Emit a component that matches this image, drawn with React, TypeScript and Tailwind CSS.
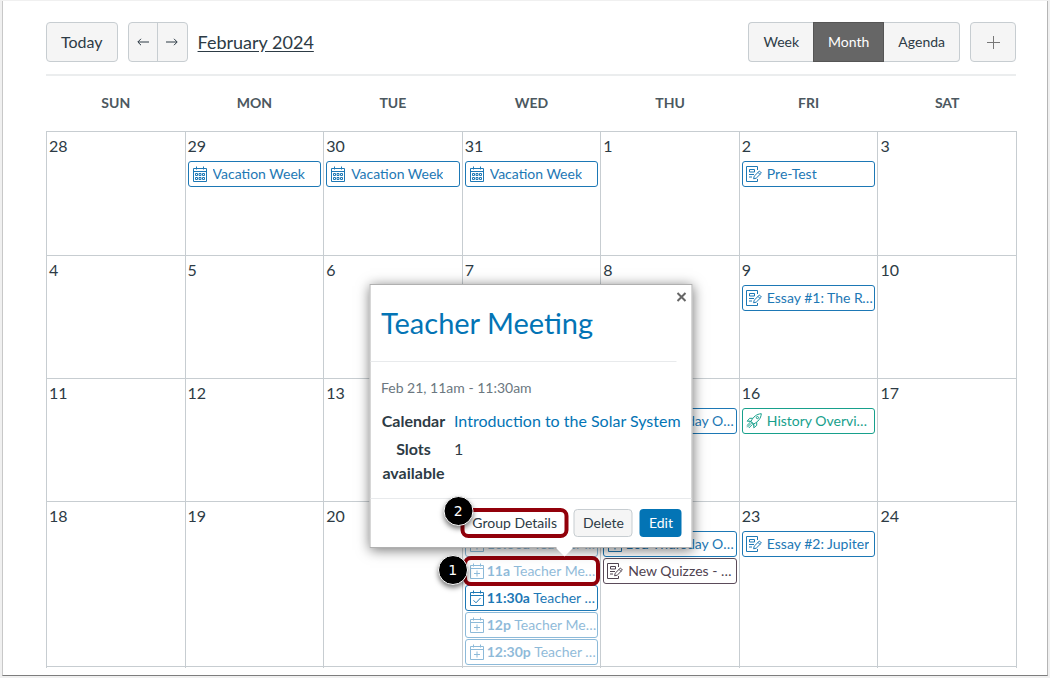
import React from "react";
import clsx from "clsx";

type IconName = "calendar" | "add" | "reserved" | "assignment" | "rocket";

type CalendarEvent = {
  title: string;
  time?: string;
  icon: IconName;
  color?: "blue" | "green" | "plum";
  faded?: boolean;
  open?: boolean;
};

type Day = { date: number; events?: CalendarEvent[] };

const vacation: CalendarEvent = { title: "Vacation Week", icon: "calendar" };
const officeHours: CalendarEvent = { time: "10a", title: "Thursday Office Hours", icon: "add" };

const weekdays = ["SUN", "MON", "TUE", "WED", "THU", "FRI", "SAT"];

const weeks: Day[][] = [
  [
    { date: 28 },
    { date: 29, events: [vacation] },
    { date: 30, events: [vacation] },
    { date: 31, events: [vacation] },
    { date: 1 },
    { date: 2, events: [{ title: "Pre-Test", icon: "assignment" }] },
    { date: 3 },
  ],
  [
    { date: 4 },
    { date: 5 },
    { date: 6 },
    { date: 7 },
    { date: 8 },
    { date: 9, events: [{ title: "Essay #1: The Rocket", icon: "assignment" }] },
    { date: 10 },
  ],
  [
    { date: 11 },
    { date: 12 },
    { date: 13 },
    { date: 14 },
    { date: 15, events: [officeHours] },
    { date: 16, events: [{ title: "History Overview Quiz", icon: "rocket", color: "green" }] },
    { date: 17 },
  ],
  [
    { date: 18 },
    { date: 19 },
    { date: 20 },
    {
      date: 21,
      events: [
        { time: "10:30a", title: "Teacher Meeting", icon: "add", faded: true },
        { time: "11a", title: "Teacher Meeting", icon: "add", faded: true, open: true },
        { time: "11:30a", title: "Teacher Meeting", icon: "reserved" },
        { time: "12p", title: "Teacher Meeting", icon: "add", faded: true },
        { time: "12:30p", title: "Teacher Meeting", icon: "add", faded: true },
      ],
    },
    {
      date: 22,
      events: [officeHours, { title: "New Quizzes - Module 2", icon: "assignment", color: "plum" }],
    },
    { date: 23, events: [{ title: "Essay #2: Jupiter", icon: "assignment" }] },
    { date: 24 },
  ],
];

const colors = {
  blue: "border-[#1d78b5] text-[#1d78b5]",
  green: "border-[#17a08c] text-[#17a08c]",
  plum: "border-[#5b4b5a] text-[#4f4350]",
};

const Icon = ({ name }: { name: IconName }) => (
  <svg
    viewBox="0 0 16 16"
    className="size-4 shrink-0"
    fill="none"
    stroke="currentColor"
    strokeWidth="1"
    aria-hidden="true"
  >
    {name === "assignment" && (
      <>
        <path d="M11.500 4V.5H.5v15h11v-2.500" />
        <path d="M3.500 3.500h5v2.500h-5zM3 8.500h5M3 11h3" />
        <path d="M7.600 12.800l.6-2.600 5.200-5.200 2 2-5.200 5.200zM12 6.400l2 2" />
      </>
    )}
    {name === "rocket" && (
      <>
        <path d="M5 8.300C7.200 4 10.500 1 15.300.7 15 5.500 12 8.800 7.700 11z" />
        <path d="M6.800 5.300H3.600L1.200 8.200l3.800.1M10.700 9.200v3.200l-2.900 2.400-.1-3.800" />
        <circle cx="11.400" cy="4.600" r="1.100" />
        <path d="M4 9.500L.7 12.800M5.200 10.300L1.300 14.200M6.300 11.500l-3.500 3.500M3.500 7.800l4.700 4.700" />
      </>
    )}
    {(name === "calendar" || name === "add" || name === "reserved") && (
      <path d="M1.500 2.500h13v13h-13zM1.500 5.500h13M4.500.5v3M11.500.5v3" />
    )}
    {name === "calendar" && (
      <path d="M3.500 7.500h2v2h-2zM7 7.500h2v2H7zM10.500 7.500h2v2h-2zM3.500 11.500h2v2h-2zM7 11.500h2v2H7zM10.500 11.500h2v2h-2z" />
    )}
    {name === "add" && <path d="M8 7.500v6M5 10.500h6" />}
    {name === "reserved" && <path d="M4.500 10.300l2.500 2.500 4.500-4.800" />}
  </svg>
);

const Marker = ({ step, className }: { step: number; className: string }) => (
  <span
    className={clsx(
      "absolute z-30 flex size-[30px] items-center justify-center rounded-full border border-white bg-black font-['DejaVu_Sans',sans-serif] text-sm text-white shadow-[0_3px_5px_rgba(0,0,0,0.5)]",
      className
    )}
  >
    {step}
  </span>
);

const Popover = () => (
  <div
    role="dialog"
    aria-label="Teacher Meeting"
    className="absolute bottom-full left-1/2 z-20 mb-2.5 w-[323px] -translate-x-1/2 border border-[#b0b0b0] bg-white text-[#2d3b45] shadow-[0_2px_12px_rgba(0,0,0,0.55)]"
  >
    <button type="button" aria-label="Close" className="absolute top-1.5 right-1 p-px text-[#666]">
      <svg viewBox="0 0 10 10" className="size-2.5" stroke="currentColor" strokeWidth="2" aria-hidden="true">
        <path d="M1 1l8 8M9 1L1 9" />
      </svg>
    </button>
    <div className="mr-[15px] border-b border-[#e8eaec] py-5 pl-2.5">
      <h2 className="text-[29px] leading-9">
        <a href="#meeting" className="text-[#0374b5]">
          Teacher Meeting
        </a>
      </h2>
    </div>
    <div className="px-2.5 pt-4 pb-[13px]">
      <p className="text-sm leading-5 text-[#6b7780]">Feb 21, 11am - 11:30am</p>
      <table className="mt-[11px] text-base leading-6">
        <tbody>
          <tr>
            <th scope="row" className="w-[65px] pb-1 align-top font-bold">
              Calendar
            </th>
            <td className="pb-1 pl-2 whitespace-nowrap">
              <a href="#course" className="text-[#0374b5]">
                Introduction to the Solar System
              </a>
            </td>
          </tr>
          <tr>
            <th scope="row" className="align-top font-bold">
              Slots available
            </th>
            <td className="pl-2 align-top">1</td>
          </tr>
        </tbody>
      </table>
    </div>
    <div className="flex justify-end gap-[7px] border-t border-[#e8eaec] p-2.5 text-sm">
      <div className="relative">
        <button type="button" className="h-7 rounded-sm px-2.5">
          Group Details
        </button>
        <span className="pointer-events-none absolute -inset-x-0.5 -inset-y-px rounded-lg border-4 border-[#92000a]" />
        <Marker step={2} className="-top-[13px] -left-[19px]" />
      </div>
      <button type="button" className="h-7 rounded-sm border border-[#c7cdd1] bg-[#f5f5f5] px-2">
        Delete
      </button>
      <button type="button" className="h-7 rounded-sm bg-[#0374b5] px-[9px] text-white">
        Edit
      </button>
    </div>
    <span className="absolute right-[121px] -bottom-[7px] size-3 rotate-45 bg-white" />
  </div>
);

const EventItem = ({ event }: { event: CalendarEvent }) => (
  <li className="relative">
    <a
      href="#event"
      className={clsx(
        "flex h-[26px] items-center rounded-[3px] border pl-[3px] text-sm",
        colors[event.color ?? "blue"],
        event.time ? "gap-0.5" : "gap-[5px]",
        event.faded && "opacity-50"
      )}
    >
      <Icon name={event.icon} />
      <span className="min-w-0 truncate">
        {event.time && <b>{event.time} </b>}
        {event.title}
      </span>
    </a>
    {event.open && (
      <>
        <span className="pointer-events-none absolute -inset-x-0.5 -inset-y-0.5 z-10 rounded-lg border-4 border-[#92000a]" />
        <Marker step={1} className="-top-[3px] -left-[27px]" />
        <Popover />
      </>
    )}
  </li>
);

const Toolbar = () => (
  <header className="mr-px flex items-center justify-between border-b-2 border-[#ebedee] pb-3">
    <div className="flex items-center gap-2.5">
      <button type="button" className="h-10 rounded border border-[#c7cdd1] bg-[#f5f5f5] px-3.5 text-base">
        Today
      </button>
      <div className="flex h-10 divide-x divide-[#c7cdd1] rounded border border-[#c7cdd1] bg-[#f5f5f5]">
        <button type="button" aria-label="Previous month" className="w-[29px] px-2">
          <svg viewBox="0 0 12 8" className="h-2 w-3" fill="none" stroke="currentColor" strokeWidth="1" aria-hidden="true">
            <path d="M12 4H1M4 .8L.8 4 4 7.200" />
          </svg>
        </button>
        <button type="button" aria-label="Next month" className="w-[29px] px-2">
          <svg viewBox="0 0 12 8" className="h-2 w-3" fill="none" stroke="currentColor" strokeWidth="1" aria-hidden="true">
            <path d="M0 4h11M8 .8L11.200 4 8 7.200" />
          </svg>
        </button>
      </div>
      <button type="button" className="text-lg underline underline-offset-2">
        February 2024
      </button>
    </div>
    <div className="flex gap-2.5 text-sm">
      <div className="flex h-10">
        <button type="button" className="rounded-l border border-r-0 border-[#c7cdd1] bg-[#f5f5f5] px-3.5">
          Week
        </button>
        <button type="button" aria-pressed="true" className="border border-[#555] bg-[#666] px-3.5 text-white">
          Month
        </button>
        <button type="button" className="rounded-r border border-l-0 border-[#c7cdd1] bg-[#f5f5f5] px-3.5">
          Agenda
        </button>
      </div>
      <button
        type="button"
        aria-label="Create new event"
        className="flex h-10 w-[46px] items-center justify-center rounded border border-[#c7cdd1] bg-[#f5f5f5]"
      >
        <svg viewBox="0 0 13 13" className="size-[13px]" stroke="#777" strokeWidth="1" aria-hidden="true">
          <path d="M6.500 0v13M0 6.500h13" />
        </svg>
      </button>
    </div>
  </header>
);

const App = () => {
  return (
    <div className="flex min-h-screen flex-col bg-[#f0f0f0] px-0.5 pt-px pb-0.5 font-[Lato,sans-serif] text-[#2d3b45]">
      <main className="flex-1 border-r border-b border-l border-r-[#b5b5b5] border-b-[#7d7d7d] border-l-[#c8c8c8] bg-white pt-[21px] pr-[30px] pl-[43px]">
        <Toolbar />
        <table className="w-full table-fixed border-collapse">
          <thead>
            <tr className="h-[55px]">
              {weekdays.map((day) => (
                <th key={day} scope="col" className="text-sm font-bold text-[#4c5860]">
                  {day}
                </th>
              ))}
            </tr>
          </thead>
          <tbody>
            {weeks.map((week) => (
              <tr key={week[0].date} className="h-[123px] first:h-[124px]">
                {week.map((day) => (
                  <td key={day.date} className="border border-[#c7cdd1] px-0.5 align-top">
                    <div className="h-[29px] pt-0.5 text-base leading-6">{day.date}</div>
                    {day.events && (
                      <ul className="flex flex-col gap-px pb-px">
                        {day.events.map((event, i) => (
                          <EventItem key={i} event={event} />
                        ))}
                      </ul>
                    )}
                  </td>
                ))}
              </tr>
            ))}
            {/* top edge of the following week */}
            <tr className="h-0.5">
              {weekdays.map((day) => (
                <td key={day} className="border-x border-[#c7cdd1]" />
              ))}
            </tr>
          </tbody>
        </table>
      </main>
    </div>
  );
};

export default App;
